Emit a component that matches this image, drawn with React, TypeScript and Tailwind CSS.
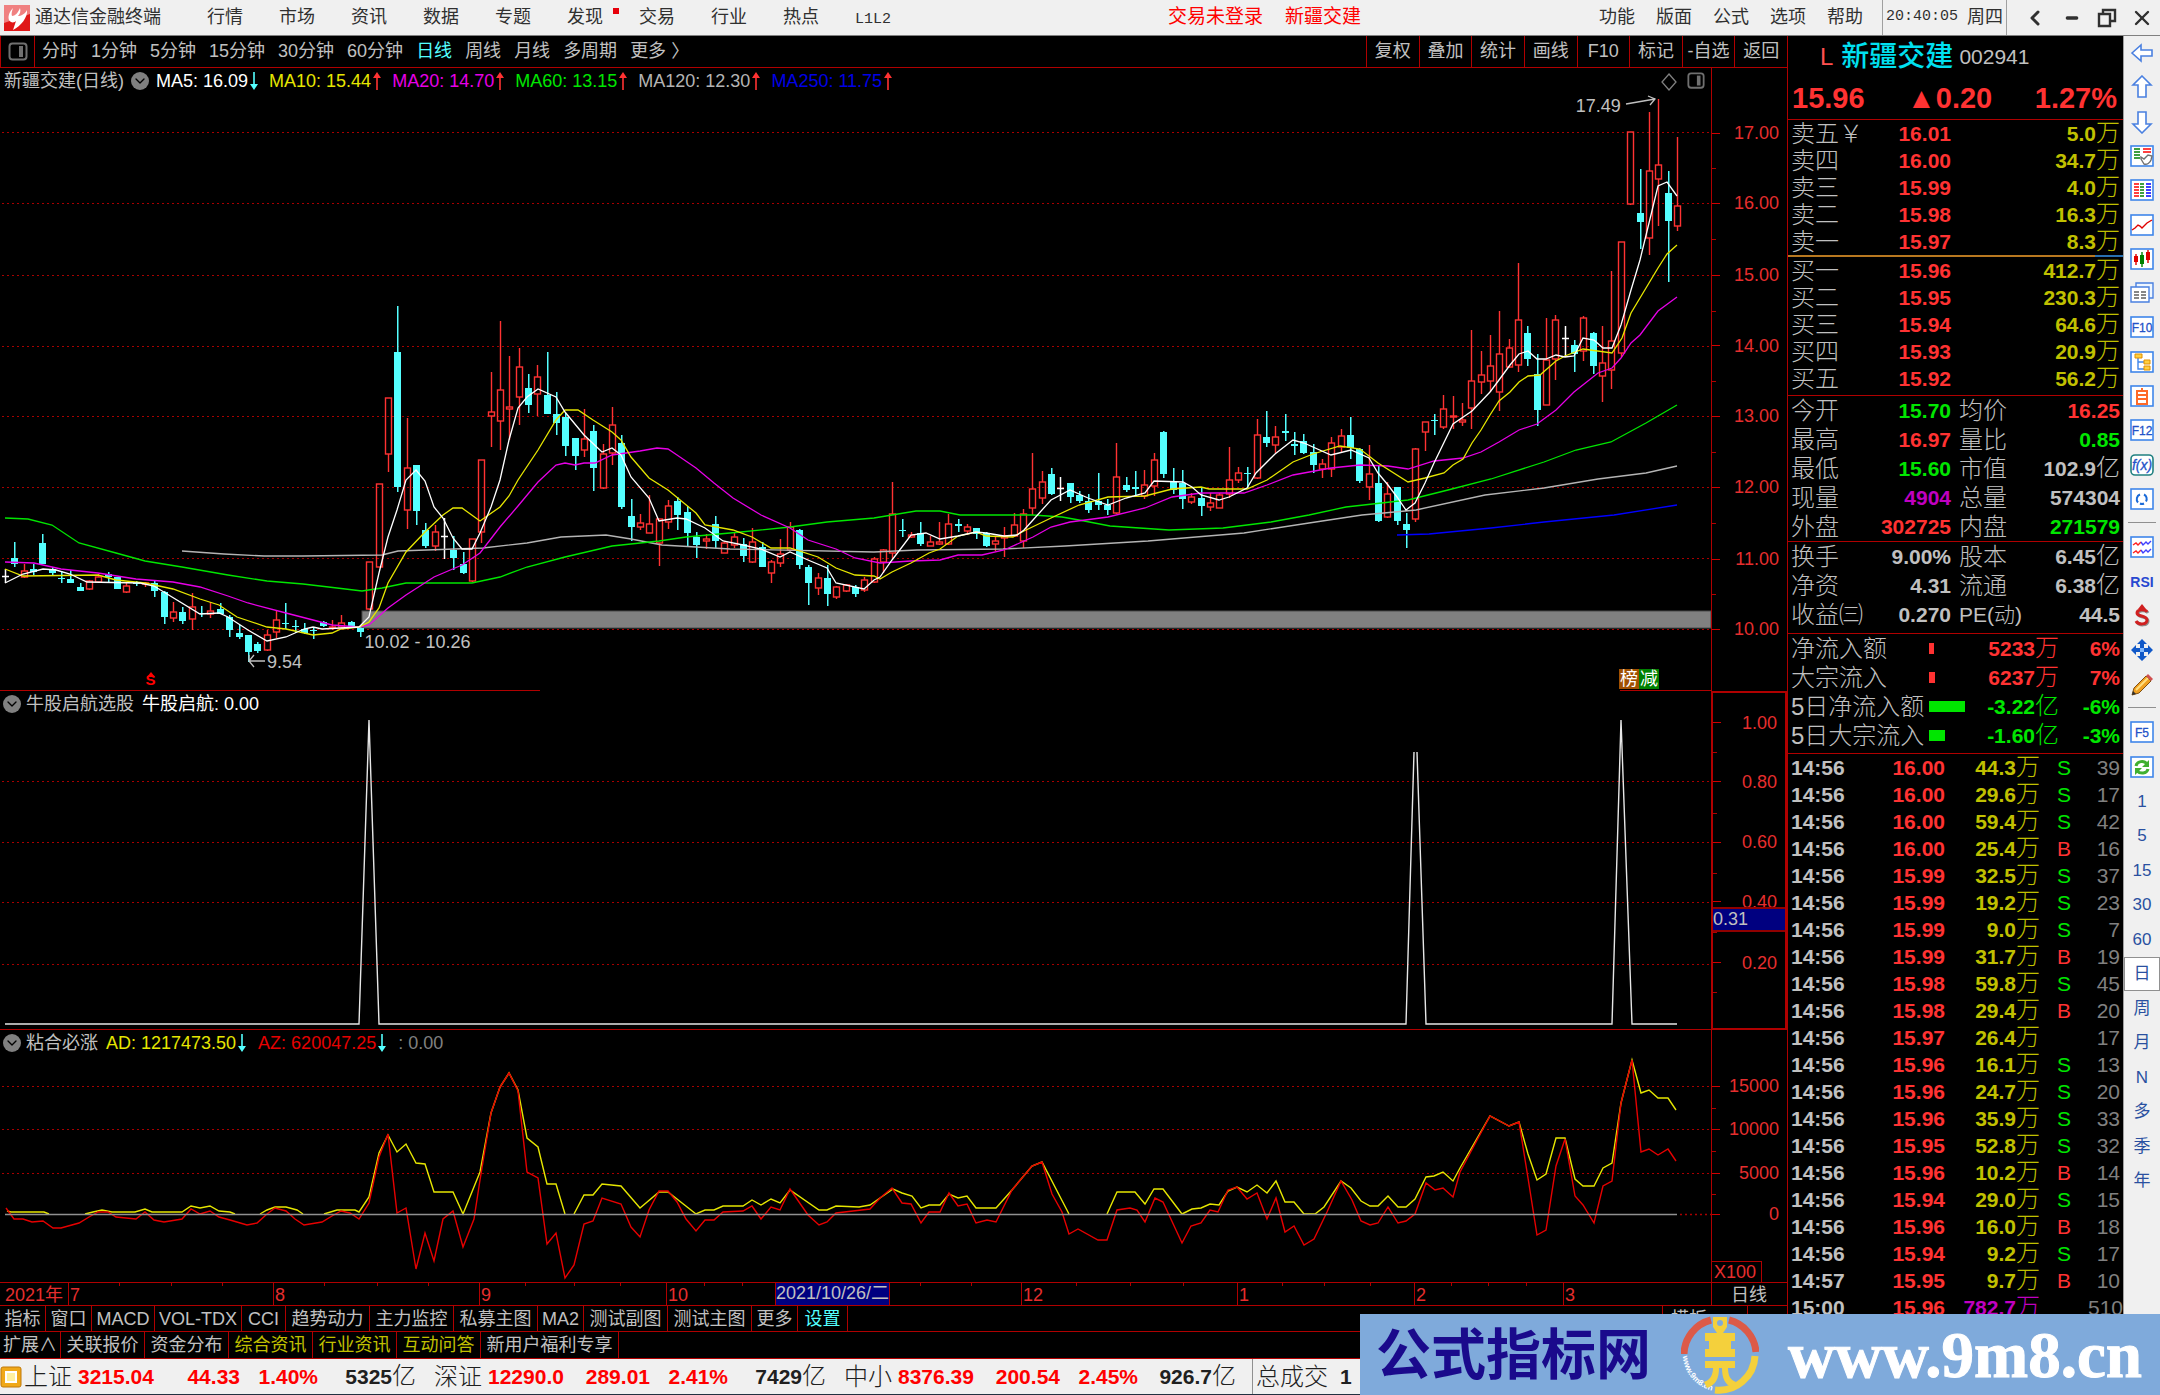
import type { ReactNode } from "react";
import { Minus, X, ChevronLeft, ChevronDown } from "lucide-react";

type Candle = [kind: "r" | "c" | "w", high: number, top: number, bottom: number, low: number];

const MENU = ["行情", "市场", "资讯", "数据", "专题", "发现", "交易", "行业", "热点", "L1L2"];
const RIGHT_MENU = ["功能", "版面", "公式", "选项", "帮助"];
const PERIODS = ["分时", "1分钟", "5分钟", "15分钟", "30分钟", "60分钟", "日线", "周线", "月线", "多周期", "更多 〉"];
const TOOLS = ["复权", "叠加", "统计", "画线", "F10", "标记", "-自选", "返回"];

// first candle sits at x = 5, one candle every 9.34 units
const CANDLES: Candle[] = [
  ["w", 569, 576, 576, 583], ["c", 542, 558, 564, 567], ["r", 564, 571, 577, 578], ["c", 564, 569, 572, 575],
  ["c", 534, 543, 564, 564], ["c", 567, 569, 573, 576], ["c", 571, 578, 579, 583], ["c", 570, 579, 583, 583],
  ["c", 583, 587, 591, 591], ["r", 580, 581, 589, 590], ["r", 574, 577, 582, 583], ["c", 572, 574, 577, 583],
  ["c", 577, 577, 589, 589], ["r", 583, 586, 592, 593], ["c", 581, 583, 584, 586], ["r", 582, 583, 584, 587],
  ["c", 580, 583, 591, 597], ["c", 591, 592, 617, 624], ["r", 602, 612, 618, 622], ["c", 607, 612, 621, 624],
  ["r", 593, 607, 619, 630], ["c", 606, 613, 614, 617], ["r", 602, 611, 614, 618], ["c", 603, 609, 614, 614],
  ["c", 615, 617, 630, 637], ["c", 625, 633, 637, 639], ["c", 635, 635, 652, 662], ["c", 642, 644, 651, 653],
  ["r", 630, 635, 650, 651], ["r", 611, 620, 632, 638], ["c", 603, 623, 624, 629], ["c", 620, 626, 627, 633],
  ["c", 623, 629, 633, 634], ["c", 627, 630, 631, 639], ["c", 621, 622, 626, 627], ["r", 620, 627, 628, 630],
  ["r", 615, 623, 627, 628], ["c", 621, 622, 626, 627], ["c", 627, 628, 632, 637], ["r", 562, 562, 609, 610],
  ["r", 484, 484, 567, 567], ["r", 398, 398, 454, 472], ["c", 306, 352, 487, 492], ["r", 418, 468, 510, 529],
  ["c", 465, 465, 511, 525], ["c", 523, 530, 546, 548], ["r", 525, 532, 546, 551], ["w", 518, 536, 536, 559],
  ["c", 536, 550, 558, 570], ["c", 552, 564, 573, 574], ["r", 539, 539, 581, 582], ["r", 460, 460, 532, 543],
  ["r", 372, 412, 416, 447], ["r", 321, 390, 421, 450], ["r", 356, 407, 409, 440], ["r", 348, 367, 397, 425],
  ["c", 374, 388, 405, 413], ["r", 365, 377, 394, 416], ["c", 352, 395, 414, 414], ["c", 392, 414, 423, 435],
  ["c", 413, 417, 446, 456], ["c", 438, 438, 456, 470], ["r", 409, 439, 450, 457], ["c", 425, 431, 468, 491],
  ["r", 444, 454, 488, 489], ["r", 407, 425, 453, 465], ["c", 435, 443, 507, 509], ["c", 499, 516, 527, 541],
  ["r", 514, 523, 527, 530], ["r", 495, 524, 533, 533], ["r", 519, 519, 543, 566], ["r", 500, 506, 522, 529],
  ["c", 497, 501, 515, 530], ["c", 506, 512, 533, 547], ["c", 532, 537, 545, 558], ["r", 534, 539, 541, 549],
  ["c", 516, 524, 541, 548], ["r", 542, 543, 553, 553], ["r", 532, 537, 545, 548], ["c", 538, 544, 556, 562],
  ["r", 528, 542, 562, 563], ["c", 542, 547, 567, 567], ["r", 560, 562, 573, 583], ["r", 539, 554, 563, 567],
  ["r", 522, 527, 550, 550], ["c", 529, 530, 565, 569], ["c", 565, 567, 583, 605], ["r", 573, 578, 588, 595],
  ["c", 565, 578, 594, 606], ["r", 586, 587, 597, 599], ["r", 584, 585, 591, 592], ["c", 585, 587, 594, 597],
  ["r", 577, 580, 590, 592], ["r", 557, 559, 582, 583], ["r", 549, 550, 562, 573], ["r", 482, 514, 553, 559],
  ["c", 519, 530, 531, 537], ["r", 532, 535, 537, 538], ["c", 522, 533, 544, 546], ["r", 536, 542, 546, 546],
  ["r", 522, 542, 544, 545], ["r", 514, 524, 544, 545], ["c", 519, 524, 526, 532], ["r", 524, 527, 531, 535],
  ["c", 528, 528, 534, 539], ["c", 532, 533, 546, 547], ["r", 537, 541, 544, 551], ["r", 527, 536, 538, 557],
  ["r", 513, 525, 536, 537], ["r", 509, 514, 541, 548], ["r", 453, 489, 508, 515], ["r", 471, 482, 498, 504],
  ["c", 468, 474, 494, 495], ["w", 477, 488, 488, 501], ["c", 483, 483, 497, 503], ["c", 491, 495, 501, 503],
  ["c", 494, 501, 510, 513], ["c", 473, 501, 505, 510], ["c", 499, 505, 510, 515], ["r", 443, 477, 513, 514],
  ["c", 477, 485, 490, 492], ["c", 471, 487, 489, 497], ["r", 470, 485, 496, 499], ["r", 453, 460, 486, 496],
  ["c", 431, 432, 474, 478], ["c", 468, 481, 490, 494], ["c", 470, 483, 499, 509], ["r", 493, 497, 502, 504],
  ["c", 488, 498, 506, 516], ["r", 493, 503, 507, 511], ["r", 493, 495, 508, 508], ["r", 447, 480, 494, 498],
  ["r", 467, 473, 480, 483], ["c", 467, 473, 474, 488], ["r", 419, 435, 478, 479], ["c", 411, 437, 443, 447],
  ["r", 426, 437, 445, 453], ["c", 414, 431, 433, 441], ["c", 432, 444, 446, 455], ["c", 434, 441, 453, 454],
  ["c", 444, 452, 465, 473], ["r", 459, 464, 469, 478], ["r", 437, 443, 469, 477], ["r", 429, 436, 447, 452],
  ["c", 417, 435, 448, 459], ["c", 448, 449, 481, 483], ["r", 445, 474, 487, 500], ["c", 465, 483, 521, 522],
  ["r", 482, 494, 517, 518], ["c", 487, 487, 521, 525], ["c", 513, 524, 530, 548], ["r", 448, 449, 519, 522],
  ["r", 422, 422, 432, 451], ["c", 414, 420, 421, 435], ["r", 395, 409, 427, 429], ["r", 396, 416, 417, 429],
  ["r", 403, 420, 422, 426], ["r", 330, 381, 408, 429], ["r", 351, 375, 382, 394], ["r", 335, 366, 381, 392],
  ["r", 311, 354, 392, 411], ["r", 339, 348, 367, 368], ["r", 263, 320, 365, 372], ["c", 326, 333, 359, 366],
  ["c", 354, 374, 410, 426], ["r", 318, 360, 405, 405], ["r", 315, 320, 359, 380], ["w", 326, 338, 338, 357],
  ["c", 340, 345, 354, 372], ["r", 316, 318, 351, 361], ["c", 332, 333, 366, 374], ["r", 326, 363, 376, 402],
  ["r", 271, 341, 370, 389], ["r", 242, 242, 353, 357], ["r", 132, 132, 204, 205], ["c", 169, 213, 222, 249],
  ["r", 112, 171, 238, 255], ["r", 99, 165, 179, 226], ["c", 171, 193, 221, 282], ["r", 137, 206, 226, 231],
];

const AVERAGES = [
  {
    color: "#0000ff",
    points: "1397,535 1429,534 1491,528 1544,522 1614,515 1677,505",
  },
  {
    color: "#b4b4b4",
    points:
      "182,551 224,554 264,556 303,556 382,555 398,551 483,548 527,543 561,537 606,535 631,539 662,545 730,549 874,552 917,550 1003,549 1065,546 1148,541 1244,533 1309,523 1362,515 1416,510 1485,495 1544,488 1598,479 1646,473 1677,466",
  },
  {
    color: "#00e600",
    points:
      "5,518 28,519 52,525 79,543 116,553 145,561 182,567 228,575 267,581 303,584 337,588 362,591 382,588 406,583 472,583 500,577 527,567 565,557 612,546 659,541 686,537 741,532 790,527 827,522 874,518 916,511 940,511 960,515 1033,515 1062,517 1079,520 1110,526 1169,530 1223,528 1271,522 1309,515 1346,507 1408,500 1448,490 1491,479 1544,462 1576,450 1611,442 1646,423 1677,405",
  },
  {
    color: "#e600e6",
    points:
      "5,562 34,563 61,569 98,573 136,579 173,582 200,587 228,596 248,603 286,613 313,620 332,625 359,627 369,625 388,608 406,595 434,577 462,565 480,553 500,527 518,506 538,482 556,465 565,463 575,465 584,463 595,463 612,455 640,451 657,448 668,449 677,455 696,468 714,483 733,498 761,515 790,528 808,540 836,549 855,558 880,563 911,561 940,560 958,555 982,555 1004,550 1033,537 1051,527 1070,522 1108,517 1145,508 1172,497 1201,493 1244,493 1267,485 1293,475 1331,468 1360,465 1388,466 1408,469 1434,461 1463,458 1481,452 1499,442 1519,430 1537,424 1556,410 1574,392 1598,373 1612,368 1621,358 1631,343 1640,335 1658,311 1677,297",
  },
  {
    color: "#e6e600",
    points:
      "5,569 23,576 98,575 116,580 145,583 173,589 200,599 219,605 237,617 267,627 286,629 313,635 332,633 341,629 359,627 369,622 379,608 388,583 406,552 425,532 443,515 453,508 462,508 480,521 500,507 509,496 518,480 538,450 556,420 565,410 578,410 593,420 612,432 621,440 631,457 649,478 668,490 696,513 705,525 733,530 752,537 771,548 790,548 818,557 836,568 855,575 874,576 880,579 892,572 911,563 929,553 940,549 958,536 976,532 986,536 1013,537 1024,531 1051,518 1079,505 1108,497 1145,496 1172,489 1201,487 1209,489 1247,489 1267,480 1293,462 1313,454 1340,446 1360,449 1378,463 1408,482 1425,478 1444,473 1453,465 1463,459 1472,443 1481,430 1490,415 1499,401 1510,392 1519,382 1528,376 1540,375 1556,361 1565,356 1583,349 1612,353 1622,338 1631,313 1649,283 1658,268 1667,254 1677,245",
  },
  {
    color: "#ffffff",
    points:
      "5,583 23,574 43,569 56,570 70,574 87,582 140,583 154,586 200,614 219,613 228,617 248,630 267,641 286,637 304,629 313,627 322,629 359,627 369,617 379,573 388,537 397,510 406,480 416,470 425,481 434,507 443,518 453,538 462,549 472,549 480,533 491,507 500,480 509,440 518,408 527,397 538,389 556,397 565,412 584,435 602,452 612,448 621,455 631,477 649,498 659,521 677,518 686,519 705,528 723,541 743,545 761,549 780,557 790,552 808,560 827,568 836,583 864,589 874,580 880,577 892,560 902,547 911,535 926,533 940,539 958,536 976,532 986,533 1004,536 1017,535 1024,530 1033,520 1051,500 1070,490 1088,498 1108,505 1126,498 1145,493 1154,481 1183,482 1192,487 1201,495 1219,500 1229,497 1247,488 1256,473 1275,454 1293,440 1304,443 1331,455 1351,450 1369,458 1378,473 1388,485 1397,497 1406,510 1415,503 1425,483 1434,463 1453,424 1472,411 1490,392 1499,380 1510,365 1519,354 1528,351 1537,359 1546,359 1556,355 1565,357 1574,356 1583,338 1594,340 1603,348 1612,348 1621,325 1631,290 1640,260 1649,223 1658,186 1667,182 1677,196",
  },
];

const AD_LINES = [
  "7,1211 11,1212 44,1212 49,1214",
  "85,1214 93,1212 102,1210 112,1212 135,1212 145,1209 152,1212 182,1212 191,1206 200,1208 210,1206 219,1211 230,1212 235,1214",
  "260,1214 267,1210 275,1207 286,1207 297,1210 303,1214",
  "324,1214 337,1210 355,1210 359,1212 369,1197 379,1153 388,1135 397,1152 406,1144 416,1163 425,1164 434,1192 453,1192 463,1214 480,1172 491,1113 500,1087 509,1073 518,1090 527,1138 538,1147 547,1184 556,1184 565,1214",
  "574,1214 584,1195 593,1195 602,1184 621,1186 640,1208 659,1192 668,1192 696,1214 705,1210 714,1210 723,1206 743,1206 752,1200 761,1205 771,1199 780,1203 790,1190 819,1210 827,1210 836,1206 859,1207 870,1205 880,1198 893,1189 902,1193 912,1196 921,1208 929,1205 940,1205 949,1194 958,1198 967,1196 976,1208 996,1208 1012,1190 1032,1166 1042,1162 1069,1214",
  "1107,1214 1117,1192 1135,1192 1145,1204 1154,1189 1163,1189 1182,1214 1192,1209 1201,1208 1210,1204 1219,1205 1228,1191 1237,1187 1247,1192 1257,1185 1267,1193 1276,1181 1285,1202 1294,1202 1304,1214 1315,1214 1324,1207 1341,1181 1351,1188 1361,1201 1370,1206 1378,1206 1388,1196 1398,1207 1406,1207 1415,1199 1426,1177 1434,1176 1443,1172 1453,1181 1460,1168 1490,1116 1509,1126 1519,1122 1528,1154 1537,1180 1546,1174 1556,1138 1565,1138 1575,1179 1583,1186 1594,1186 1603,1168 1612,1163 1621,1103 1632,1060 1641,1093 1649,1090 1658,1098 1668,1098 1676,1110",
];

const AZ_LINE =
  "6,1208 14,1219 23,1219 32,1222 43,1221 53,1228 61,1228 79,1223 89,1217 98,1212 108,1212 116,1217 136,1219 145,1212 154,1220 164,1222 182,1219 191,1209 200,1214 210,1211 219,1217 230,1220 247,1225 257,1223 267,1214 275,1208 286,1211 295,1219 304,1225 322,1222 332,1216 341,1211 350,1213 359,1219 369,1203 379,1157 388,1134 397,1213 406,1208 416,1269 425,1233 434,1261 443,1219 453,1211 463,1247 474,1219 480,1180 491,1113 500,1087 509,1073 518,1091 527,1172 538,1178 547,1244 556,1233 565,1278 574,1265 584,1224 593,1221 602,1198 621,1204 631,1227 640,1237 649,1210 659,1191 668,1191 677,1202 686,1219 696,1231 705,1220 714,1220 723,1212 743,1211 752,1206 761,1219 771,1207 780,1210 790,1189 808,1215 819,1225 827,1222 836,1213 870,1209 880,1198 892,1188 902,1203 911,1204 921,1223 929,1212 940,1212 949,1193 958,1206 967,1204 976,1223 987,1220 996,1222 1012,1190 1032,1166 1042,1162 1052,1194 1062,1212 1069,1234 1078,1229 1098,1240 1107,1240 1117,1210 1130,1208 1137,1210 1145,1222 1155,1198 1163,1202 1182,1243 1191,1226 1201,1223 1210,1210 1218,1212 1228,1190 1237,1187 1247,1199 1257,1193 1267,1219 1276,1198 1285,1232 1294,1226 1304,1245 1314,1239 1327,1212 1341,1181 1352,1200 1361,1221 1370,1225 1378,1223 1388,1207 1398,1223 1406,1221 1415,1214 1426,1183 1435,1190 1443,1188 1453,1197 1460,1172 1490,1116 1509,1126 1519,1122 1528,1178 1537,1235 1546,1230 1556,1166 1565,1139 1575,1196 1583,1205 1594,1223 1603,1186 1612,1181 1621,1103 1632,1060 1641,1152 1649,1149 1658,1155 1668,1149 1676,1161";

const ASKS = [
  ["卖五￥", "16.01", "5.0"],
  ["卖四", "16.00", "34.7"],
  ["卖三", "15.99", "4.0"],
  ["卖二", "15.98", "16.3"],
  ["卖一", "15.97", "8.3"],
];

const BIDS = [
  ["买一", "15.96", "412.7"],
  ["买二", "15.95", "230.3"],
  ["买三", "15.94", "64.6"],
  ["买四", "15.93", "20.9"],
  ["买五", "15.92", "56.2"],
];

const RED = "text-[#ff3232]";
const GREEN = "text-[#00e600]";
const GRAY = "text-[#c0c0c0]";
const PURPLE = "text-[#c000c0]";

const STATS = [
  ["今开", "15.70", GREEN, "均价", "16.25", RED, ""],
  ["最高", "16.97", RED, "量比", "0.85", GREEN, ""],
  ["最低", "15.60", GREEN, "市值", "102.9", GRAY, "亿"],
  ["现量", "4904", PURPLE, "总量", "574304", GRAY, ""],
  ["外盘", "302725", RED, "内盘", "271579", GREEN, ""],
];

const SHARES = [
  ["换手", "9.00%", GRAY, "股本", "6.45", GRAY, "亿"],
  ["净资", "4.31", GRAY, "流通", "6.38", GRAY, "亿"],
  ["收益㈢", "0.270", GRAY, "PE(动)", "44.5", GRAY, ""],
];

const FLOWS = [
  { name: "净流入额", bar: 5, value: "5233", unit: "万", pct: "6%", up: true },
  { name: "大宗流入", bar: 6, value: "6237", unit: "万", pct: "7%", up: true },
  { name: "5日净流入额", bar: 36, value: "-3.22", unit: "亿", pct: "-6%", up: false },
  { name: "5日大宗流入", bar: 16, value: "-1.60", unit: "亿", pct: "-3%", up: false },
];

const TICKS = [
  ["14:56", "16.00", "44.3", "S", "39"],
  ["14:56", "16.00", "29.6", "S", "17"],
  ["14:56", "16.00", "59.4", "S", "42"],
  ["14:56", "16.00", "25.4", "B", "16"],
  ["14:56", "15.99", "32.5", "S", "37"],
  ["14:56", "15.99", "19.2", "S", "23"],
  ["14:56", "15.99", "9.0", "S", "7"],
  ["14:56", "15.99", "31.7", "B", "19"],
  ["14:56", "15.98", "59.8", "S", "45"],
  ["14:56", "15.98", "29.4", "B", "20"],
  ["14:56", "15.97", "26.4", "", "17"],
  ["14:56", "15.96", "16.1", "S", "13"],
  ["14:56", "15.96", "24.7", "S", "20"],
  ["14:56", "15.96", "35.9", "S", "33"],
  ["14:56", "15.95", "52.8", "S", "32"],
  ["14:56", "15.96", "10.2", "B", "14"],
  ["14:56", "15.94", "29.0", "S", "15"],
  ["14:56", "15.96", "16.0", "B", "18"],
  ["14:56", "15.94", "9.2", "S", "17"],
  ["14:57", "15.95", "9.7", "B", "10"],
  ["15:00", "15.96", "782.7", "", "510"],
];

const MONTHS: [number, string][] = [[68, "7"], [273, "8"], [479, "9"], [666, "10"], [1021, "12"], [1237, "1"], [1414, "2"], [1563, "3"]];
const DATE_TICKS = [119, 171, 222, 324, 377, 428, 525, 574, 620, 704, 742, 920, 971, 1076, 1130, 1183, 1282, 1324, 1370, 1451, 1488, 1526];

const INDICATORS = [
  ["指标", "w-[46px]"], ["窗口", "w-[46px]"], ["MACD", "w-[63px]"], ["VOL-TDX", "w-[87px]"], ["CCI", "w-[44px]"],
  ["趋势动力", "w-[84px]"], ["主力监控", "w-[84px]"], ["私募主图", "w-[84px]"], ["MA2", "w-[46px]"],
  ["测试副图", "w-[84px]"], ["测试主图", "w-[84px]"], ["更多", "w-[46px]"], ["设置", "w-[50px] text-[#54ffff]"],
];

const EXTENSIONS = [
  ["扩展∧", "w-[61px]"], ["关联报价", "w-[84px]"], ["资金分布", "w-[84px]"], ["综合资讯", "w-[84px] text-[#c0c000]"],
  ["行业资讯", "w-[84px] text-[#c0c000]"], ["互动问答", "w-[84px] text-[#c0c000]"], ["新用户福利专享", "w-[138px]"],
];

const INDEXES = [
  { name: "上证", last: "3215.04", diff: "44.33", pct: "1.40%", amount: "5325" },
  { name: "深证", last: "12290.0", diff: "289.01", pct: "2.41%", amount: "7429" },
  { name: "中小", last: "8376.39", diff: "200.54", pct: "2.45%", amount: "926.7" },
];

function PanelIcon({ className }: { className: string }) {
  return (
    <svg viewBox="0 0 20 20" className={className} fill="none">
      <rect x="1.5" y="1.5" width="17" height="16" rx="3" stroke="currentColor" strokeWidth="2" />
      <rect x="11" y="4" width="4" height="11" fill="currentColor" />
    </svg>
  );
}

function Toggle() {
  return (
    <button aria-label="折叠" className="flex size-[18px] items-center justify-center rounded-full bg-[#808080] text-black">
      <ChevronDown className="size-4" strokeWidth={2} />
    </button>
  );
}

function Arrow({ up }: { up?: boolean }) {
  return up ? (
    <svg viewBox="0 0 8 18" className="h-[18px] w-2">
      <path d="M4 18V4" stroke="#ff3232" strokeWidth="1.6" />
      <path d="M4 0 8 6H0z" fill="#ff3232" />
    </svg>
  ) : (
    <svg viewBox="0 0 8 18" className="h-[18px] w-2">
      <path d="M4 0v14" stroke="#54ffff" strokeWidth="1.6" />
      <path d="M4 18 8 12H0z" fill="#54ffff" />
    </svg>
  );
}

function GridLines({ rows }: { rows: number[] }) {
  return (
    <>
      {rows.map((y) => (
        <path key={y} d={`M2 ${y}.5H1711`} stroke="#a80000" strokeDasharray="2 3" shapeRendering="crispEdges" />
      ))}
    </>
  );
}

interface AxisProps {
  top: number;
  height: number;
  labels: [number, string][];
  minor: number[];
  className?: string;
  children?: ReactNode;
}

function Axis({ top, height, labels, minor, className = "", children }: AxisProps) {
  const at = (y: number) => ({ top: `${((y - top) / height) * 100}%` });
  return (
    <div className={`relative w-[76px] flex-none border-[#b00000] text-[18px] leading-5 text-[#e62e2e] ${className}`}>
      {minor.map((y) => (
        <span key={y} className="absolute left-0 h-px w-1 bg-[#b00000]" style={at(y)} />
      ))}
      {labels.map(([y, text]) => (
        <div key={y} className="absolute inset-x-0 flex -translate-y-1/2 items-center justify-between pr-2" style={at(y)}>
          <span className="h-px w-2 bg-[#d00000]" />
          <span>{text}</span>
        </div>
      ))}
      {children}
    </div>
  );
}

function PriceChart() {
  return (
    <svg viewBox="0 68 1711 623" preserveAspectRatio="none" className="absolute inset-0 size-full">
      <GridLines rows={[132, 203, 275, 346, 416, 487, 558, 629]} />
      <rect x="362" y="611" width="1349" height="17" fill="#808080" stroke="#4a4a4a" />
      {CANDLES.map(([kind, high, top, bottom, low], i) => {
        const x = Math.round(5 + i * 9.34);
        const height = Math.max(bottom - top, 1);
        if (kind === "w") {
          return <path key={i} d={`M${x + 0.5} ${high}V${low}M${x - 3} ${top + 0.5}h7`} stroke="#fff" strokeWidth="1.5" />;
        }
        if (kind === "c") {
          return (
            <g key={i} fill="#54ffff">
              <rect x={x} y={high} width="1.5" height={low - high} />
              <rect x={x - 3} y={top} width="7" height={height} />
            </g>
          );
        }
        return (
          <g key={i} stroke="#ff3232" strokeWidth="1.4" fill="none">
            <path d={`M${x + 0.5} ${high}V${top}M${x + 0.5} ${bottom}V${low}`} />
            <rect x={x - 2.5} y={top} width="6" height={height} />
          </g>
        );
      })}
      {AVERAGES.map((line) => (
        <polyline key={line.color} points={line.points} fill="none" stroke={line.color} strokeWidth="1.3" />
      ))}
      <g fill="none" stroke="#c0c0c0" strokeWidth="1.3">
        <path d="M265 661h-16M254 655l-5 6 5 6M249 661v-6" />
        <path d="M1626 104 1655 99M1648 96l7 3-5 6" />
        <path d="M1669 74l7 8-7 8-7-8z" stroke="#808080" />
      </g>
      <path d="M151 672l4 5h-8z" fill="#ff0000" />
      <path d="M0 690.5H540M1620 690.5H1711" stroke="#b00000" />
    </svg>
  );
}

function SignalChart() {
  return (
    <svg viewBox="0 691 1711 339" preserveAspectRatio="none" className="absolute inset-0 size-full">
      <GridLines rows={[781, 842, 902, 964]} />
      <g fill="none" stroke="#e6e6e6" strokeWidth="1.4">
        <path d="M5 1024H359L369 720 379 1024H1406L1414 752M1417 752 1426 1024H1612L1621 720 1632 1024H1677" />
      </g>
      <path d="M0 1029.5H1711" stroke="#b00000" />
    </svg>
  );
}

function FlowChart() {
  return (
    <svg viewBox="0 1030 1711 252" preserveAspectRatio="none" className="absolute inset-0 size-full">
      <GridLines rows={[1086, 1129, 1173]} />
      <g fill="none" strokeWidth="1.4">
        <path d="M1680 1214.5H1711" stroke="#a80000" strokeDasharray="2 3" />
        {AD_LINES.map((points) => (
          <polyline key={points} points={points} stroke="#e6e600" />
        ))}
        <polyline points={AZ_LINE} stroke="#e60000" />
        <path d="M5 1214.5H1677" stroke="#909090" />
      </g>
    </svg>
  );
}

function DateAxis() {
  const at = (x: number) => ({ left: `${(x / 1711) * 100}%` });
  return (
    <div className="flex h-6 flex-none border-y border-[#b00000] text-[18px] leading-6 text-[#e62e2e]">
      <div className="relative flex-1">
        <span className="absolute left-[5px] leading-6">2021年</span>
        {DATE_TICKS.map((x) => (
          <span key={x} className="absolute top-0 h-[3px] w-px bg-[#b00000]" style={at(x)} />
        ))}
        {MONTHS.map(([x, text]) => (
          <span key={x} className="absolute inset-y-0 border-l border-[#b00000] pl-px" style={at(x)}>
            {text}
          </span>
        ))}
        <span className="absolute inset-y-0 border-x border-[#b00000] bg-[#000080] leading-5 text-[#c0c0c0]" style={at(775)}>
          2021/10/26/二
        </span>
      </div>
      <div className="w-[76px] border-l border-[#b00000] pl-[19px] text-[#c0c0c0]">日线</div>
    </div>
  );
}

function Unit({ children }: { children: ReactNode }) {
  return <span className="text-[24px] leading-5 font-light">{children}</span>;
}

function Depth({ rows, label }: { rows: string[][]; label: string }) {
  return (
    <table aria-label={label} className="w-full table-fixed">
      <tbody>
        {rows.map(([name, price, volume]) => (
          <tr key={name} className="h-[27px]">
            <th className="w-[84px] text-left text-[24px] leading-5 font-light whitespace-nowrap text-[#c0c0c0]">{name}</th>
            <td className="w-[76px] text-right font-bold text-[#ff3232]">{price}</td>
            <td className="text-right font-bold text-[#c0c000]">
              {volume}
              <Unit>万</Unit>
            </td>
          </tr>
        ))}
      </tbody>
    </table>
  );
}

function Stats({ rows, label }: { rows: string[][]; label: string }) {
  return (
    <table aria-label={label} className="w-full table-fixed">
      <tbody>
        {rows.map(([name, value, tone, name2, value2, tone2, unit]) => (
          <tr key={name} className="h-[29px]">
            <th className="w-[74px] text-left text-[24px] leading-5 font-light whitespace-nowrap text-[#c0c0c0]">{name}</th>
            <td className={`w-[86px] text-right font-bold ${tone}`}>{value}</td>
            <th
              className={`w-[80px] pl-2 text-left leading-5 font-light whitespace-nowrap text-[#c0c0c0] ${name2.startsWith("PE") ? "text-[21px]" : "text-[24px]"}`}
            >
              {name2}
            </th>
            <td className={`text-right font-bold ${tone2}`}>
              {value2}
              {unit && <Unit>{unit}</Unit>}
            </td>
          </tr>
        ))}
      </tbody>
    </table>
  );
}

function Quote() {
  return (
    <aside className="flex w-[337px] flex-none flex-col overflow-hidden border-x border-l-[#b00000] border-r-[#a0a0a0] text-[21px] leading-6 text-[#c0c0c0]">
      <div className="h-[84px] flex-none border-b border-[#b00000]">
        <div className="flex h-[42px] items-center pl-8">
          <span className="text-[24px] text-[#ff5050]">L</span>
          <h1 className="ml-2 text-[28px] leading-9 font-medium text-[#00e0f0]">新疆交建</h1>
          <span className="ml-[6px] text-[21px]">002941</span>
        </div>
        <div className="flex h-10 items-center justify-between pr-[6px] pl-1 text-[29px] font-bold text-[#ff3232]">
          <span>15.96</span>
          <span>▲0.20</span>
          <span>1.27%</span>
        </div>
      </div>
      <div className="px-[3px]">
        <Depth rows={ASKS} label="卖盘" />
      </div>
      <div className="flex h-[2px] flex-none">
        <span className="flex-1 bg-[#b87820]" />
        <span className="w-7 bg-[#2870b0]" />
      </div>
      <div className="border-b border-[#b00000] px-[3px] pb-[3px]">
        <Depth rows={BIDS} label="买盘" />
      </div>
      <div className="border-b border-[#b00000] px-[3px]">
        <Stats rows={STATS} label="行情" />
      </div>
      <div className="border-b border-[#b00000] px-[3px] pb-1">
        <Stats rows={SHARES} label="股本" />
      </div>
      <div className="border-b border-[#b00000] px-[3px] pb-[3px]">
        <table aria-label="资金" className="w-full table-fixed">
          <tbody>
            {FLOWS.map((f) => (
              <tr key={f.name} className={`h-[29px] font-bold ${f.up ? RED : GREEN}`}>
                <th className="w-[138px] text-left text-[24px] leading-5 font-light whitespace-nowrap text-[#c0c0c0]">{f.name}</th>
                <td className="w-10">
                  <span className={`block h-[11px] ${f.up ? "bg-[#ff3232]" : "bg-[#00e600]"}`} style={{ width: f.bar }} />
                </td>
                <td className="w-[90px] text-right whitespace-nowrap">
                  {f.value}
                  <Unit>{f.unit}</Unit>
                </td>
                <td className="text-right">{f.pct}</td>
              </tr>
            ))}
          </tbody>
        </table>
      </div>
      <div className="px-[3px]">
        <table aria-label="分笔成交" className="w-full table-fixed">
          <tbody>
            {TICKS.map(([time, price, volume, side, count], i) => (
              <tr key={i} className="h-[27px]">
                <td className="w-[70px] font-bold">{time}</td>
                <td className="w-[84px] text-right font-bold text-[#ff3232]">{price}</td>
                <td className={`w-[95px] text-right font-bold ${side === "" && count === "510" ? PURPLE : "text-[#c0c000]"}`}>
                  {volume}
                  <Unit>万</Unit>
                </td>
                <td className={`w-12 text-center ${side === "S" ? GREEN : RED}`}>{side}</td>
                <td className="text-right text-[#808080]">{count}</td>
              </tr>
            ))}
          </tbody>
        </table>
      </div>
    </aside>
  );
}

function Tile({ children }: { children: ReactNode }) {
  return (
    <svg viewBox="0 0 24 22" className="h-[22px] w-6" fill="none">
      <rect x="1" y="1" width="22" height="20" fill="#fff" stroke="#3f86ea" strokeWidth="1.6" />
      {children}
    </svg>
  );
}

function TileText({ text }: { text: string }) {
  return (
    <Tile>
      <text x="12" y="16" textAnchor="middle" fontSize="12" fill="#2452c8" stroke="#2452c8" strokeWidth="0.3">
        {text}
      </text>
    </Tile>
  );
}

const STRIP_TOP: [string, ReactNode][] = [
  ["后退", <svg viewBox="0 0 24 22" className="h-[22px] w-6"><path d="M2 11 11 3v5h11v6H11v5z" fill="#fff" stroke="#4a80e0" strokeWidth="1.6" /></svg>],
  ["上一只", <svg viewBox="0 0 22 24" className="h-6 w-[22px]"><path d="M11 1 20 10h-5v12H7V10H2z" fill="#fff" stroke="#4a80e0" strokeWidth="1.6" /></svg>],
  ["下一只", <svg viewBox="0 0 22 24" className="h-6 w-[22px]"><path d="M11 23 20 14h-5V2H7v12H2z" fill="#fff" stroke="#4a80e0" strokeWidth="1.6" /></svg>],
  [
    "报价",
    <Tile>
      <path d="M4 4h6M4 7h6M4 10h6M4 13h6" stroke="#008000" strokeWidth="1.6" />
      <path d="M13 4h8M13 7h8" stroke="#ff0000" strokeWidth="1.6" />
      <path d="M11 14l3 5c3 1 6-1 7-4l1-4-4-1-4 4-3-2z" stroke="#707070" strokeWidth="1.4" />
    </Tile>,
  ],
  [
    "列表",
    <Tile>
      <path d="M4 5h5M4 8h5M4 11h5M4 14h5M4 17h5" stroke="#ff0000" strokeWidth="1.5" />
      <path d="M10 5h4M10 8h4M10 11h4M10 14h4M10 17h4" stroke="#008000" strokeWidth="1.5" />
      <path d="M16 5h5M16 8h5M16 11h5M16 14h5M16 17h5" stroke="#0000ff" strokeWidth="1.5" />
    </Tile>,
  ],
  ["分时图", <Tile><path d="M2 16l3-2 3-3 2 1 2 2 5-5 5-3" stroke="#e00000" strokeWidth="1.4" /></Tile>],
  [
    "K线图",
    <Tile>
      <path d="M6 6v11M18 2v13" stroke="#e00000" strokeWidth="1.4" />
      <path d="M4 8h4v6H4zM16 4h4v8h-4z" fill="#e00000" />
      <path d="M12 4v15" stroke="#008000" strokeWidth="1.4" />
      <path d="M10 7h4v9h-4z" fill="#008000" />
    </Tile>,
  ],
  [
    "资讯",
    <svg viewBox="0 0 24 22" className="h-[22px] w-6">
      <path d="M6 1h17v15H6z" fill="#eef6ff" stroke="#4a80e0" strokeWidth="1.4" />
      <path d="M1 5h18v15H1z" fill="#fff" stroke="#4a80e0" strokeWidth="1.4" />
      <path d="M4 10h5M11 10h5M4 13h5M11 13h5M4 16h5M11 16h5" stroke="#606060" strokeWidth="1.3" />
    </svg>,
  ],
  ["F10", <TileText text="F10" />],
  [
    "板块",
    <Tile>
      <path d="M8 6v12h6M8 11h6" stroke="#3f86ea" strokeWidth="1.4" />
      <path d="M5 3h7v4H5zM14 9h6v4h-6zM14 15h6v4h-6z" fill="#ffd040" stroke="#e09000" />
    </Tile>,
  ],
  [
    "自选",
    <Tile>
      <path d="M7 6h10v13H7zM7 10h10M7 14h10M12 3v3" stroke="#ff6a28" strokeWidth="2" />
    </Tile>,
  ],
  ["F12", <TileText text="F12" />],
  [
    "公式",
    <svg viewBox="0 0 24 22" className="h-[22px] w-6">
      <rect x="1" y="1" width="22" height="20" rx="4" fill="#fff" stroke="#208080" strokeWidth="1.6" />
      <text x="12" y="16" textAnchor="middle" fontSize="14" fontStyle="italic" fill="#2452c8" stroke="#2452c8" strokeWidth="0.3">f(x)</text>
    </svg>,
  ],
  [
    "刷新",
    <Tile>
      <path d="M8 14.500A5 5 0 0 1 10 6.500M14 6.500a5 5 0 0 1 2 7M14 15.500a5 5 0 0 1-4 0" stroke="#1a6ad8" strokeWidth="2" />
    </Tile>,
  ],
];

const STRIP_MIDDLE: [string, ReactNode][] = [
  [
    "多图",
    <Tile>
      <path d="M3 9l3-2 2 2 3-3M3 17l3-2 2 2 3-3" stroke="#ff2020" strokeWidth="1.4" />
      <path d="M11 6l2 3 3-3 2 2 3-3M11 14l2 3 3-3 2 2 3-3" stroke="#4040ff" strokeWidth="1.4" />
    </Tile>,
  ],
  ["RSI", <span className="text-[14px] font-bold text-[#2848d0]">RSI</span>],
  [
    "交易",
    <svg viewBox="0 0 22 24" className="h-6 w-[22px]" fill="none">
      <path d="M17 9c-2-3-10-3-10 1s10 2 10 7-9 5-11 1" stroke="#909090" strokeWidth="3" />
      <path d="M16 8C14 5 6 5 6 9s10 2 10 7-9 5-11 1" stroke="#d02020" strokeWidth="3" />
      <path d="M11 0l4 5H7z" fill="#d02020" />
    </svg>,
  ],
  [
    "移动",
    <svg viewBox="0 0 24 24" className="size-6">
      <path d="M12 1l5 5H7zM12 23l5-5H7zM1 12l5-5v10zM23 12l-5-5v10z" fill="#1058c8" />
      <path d="M12 5v14M5 12h14" stroke="#1058c8" strokeWidth="4" />
      <rect x="10" y="10" width="4" height="4" fill="#80b8ff" />
    </svg>,
  ],
  [
    "画线",
    <svg viewBox="0 0 24 24" className="size-6">
      <path d="M2 22l2-7L16 3l5 5L9 20z" fill="#f0a020" stroke="#805010" />
      <path d="M6 17 18 5" stroke="#ffe080" strokeWidth="2" />
      <path d="M16 3l2-2 5 5-2 2z" fill="#d05050" />
      <path d="M2 22l1-4 3 3z" fill="#303030" />
    </svg>,
  ],
];

const STRIP_PERIODS = ["1", "5", "15", "30", "60", "日", "周", "月", "N", "多", "季", "年"];

function IconStrip() {
  return (
    <nav aria-label="工具" className="flex w-9 flex-none flex-col bg-[#f0f0f0] text-[#2a50a0]">
      <div className="grid h-[480px] auto-rows-fr place-items-center">
        {STRIP_TOP.map(([label, icon]) => (
          <button key={label} aria-label={label}>{icon}</button>
        ))}
      </div>
      <hr className="mx-1 mt-[6px] mb-[7px] border-[#909090]" />
      <div className="grid h-[172px] auto-rows-fr place-items-center">
        {STRIP_MIDDLE.map(([label, icon]) => (
          <button key={label} aria-label={label}>{icon}</button>
        ))}
      </div>
      <hr className="mx-1 mt-[5px] mb-[7px] border-[#909090]" />
      <div className="grid h-[483px] auto-rows-fr text-[17px]">
        <button aria-label="F5" className="flex items-center justify-center">
          <TileText text="F5" />
        </button>
        <button aria-label="同步" className="flex items-center justify-center">
          <Tile>
            <path d="M6 10c1-5 8-6 11-2M18 13c-1 5-8 5-11 2" stroke="#40b030" strokeWidth="3" />
            <path d="M19 4v7h-7zM5 19v-7h7z" fill="#40b030" />
          </Tile>
        </button>
        {STRIP_PERIODS.map((p) => (
          <button key={p} className={p === "日" ? "border border-[#909090] bg-white" : ""}>
            {p}
          </button>
        ))}
      </div>
    </nav>
  );
}

function Watermark() {
  return (
    <div className="absolute right-0 bottom-0 flex h-[81px] w-[800px] items-center bg-[#7faadb] pl-4 whitespace-nowrap">
      <span className="text-[55px] leading-[80px] font-bold text-[#1a0a8c]">公式指标网</span>
      <svg viewBox="0 0 78 78" className="ml-[30px] size-[78px] flex-none" fill="none">
        <path d="M3 38A36 36 0 0 1 30 4M48 4A36 36 0 0 1 75 36" stroke="#dc5a48" strokeWidth="7" />
        <path d="M74 40A36 36 0 0 1 34 74" stroke="#f4d03c" strokeWidth="7" />
        <path id="arc" d="M2 40A37 37 0 0 0 34 75" />
        <text fontSize="8" fontWeight="bold" fill="#fff">
          <textPath href="#arc">www.9m8.cn</textPath>
        </text>
        <g fill="#f4d03c">
          <path d="M32 1h14v10l-4 6h-6l-4-6z" />
          <path d="M24 17h30v8H24zM28 25h8v10h-8zM42 25h8v10h-8zM24 33h30v8H24zM24 45h30v7H24zM32 52h6c0 10-3 17-12 20l-3-6c6-2 9-7 9-14zM41 52h6c0 7 2 12 8 14l-3 6c-8-3-11-10-11-20z" />
          <path d="M36 15h6v26h-6z" />
        </g>
        <circle cx="39" cy="7" r="3" fill="#7faadb" />
      </svg>
      <span className="ml-[29px] font-['Liberation_Serif',serif] text-[65px] leading-[80px] font-bold text-white [-webkit-text-stroke:1px_white]">
        www.9m8.cn
      </span>
    </div>
  );
}

export default function App() {
  return (
    <div className="relative flex h-screen flex-col overflow-hidden bg-black font-['Liberation_Sans','Noto_Sans_CJK_SC',sans-serif]">
      <header className="flex h-9 flex-none items-center border-b border-[#808080] bg-[#f0f0f0] text-[18px] text-[#303030]">
        <svg viewBox="0 0 26 26" className="ml-1 size-[26px]">
          <rect width="26" height="26" fill="#e01818" />
          <path d="M0 0h26v9L0 18z" fill="#f08080" />
          <path d="M9 3C4 8 3 15 7 17c2 1 4 0 5-1l-3 9C17 21 24 12 23 5c-2 4-6 6-9 6 2-2 3-5 2-8-2 5-5 8-8 8-1-2 0-5 1-8z" fill="#fff" />
        </svg>
        <span className="ml-[5px]">通达信金融终端</span>
        <nav className="ml-[46px] flex gap-9">
          {MENU.map((item) => (
            <button key={item} className="relative w-9 whitespace-nowrap">
              {item === "L1L2" ? <span className="font-['Liberation_Mono',monospace] text-[15px]">{item}</span> : item}
              {item === "发现" && <span className="absolute top-1 -right-4 size-[6px] bg-red-600" />}
            </button>
          ))}
        </nav>
        <div className="ml-auto flex gap-[22px] pr-[238px] text-[19px] text-[#ff0000]">
          <button>交易未登录</button>
          <button>新疆交建</button>
        </div>
        <nav className="flex gap-[21px] pr-[19px]">
          {RIGHT_MENU.map((item) => (
            <button key={item}>{item}</button>
          ))}
        </nav>
        <div className="flex h-full items-center gap-[9px] border-x border-[#a0a0a0] px-[3px]">
          <span className="font-['Liberation_Mono',monospace] text-[15px]">20:40:05</span>
          <span>周四</span>
        </div>
        <div className="flex items-center gap-[13px] pr-[6px] pl-4">
          <button aria-label="收起"><ChevronLeft className="size-6" strokeWidth={3} /></button>
          <button aria-label="最小化" className="px-1"><Minus className="size-4" strokeWidth={5} /></button>
          <button aria-label="还原">
            <svg viewBox="0 0 20 20" className="size-5" fill="none" stroke="#303030" strokeWidth="2.4">
              <path d="M6 5V2h12v11h-4" />
              <path d="M2 6h11v12H2z" />
            </svg>
          </button>
          <button aria-label="关闭"><X className="size-6" strokeWidth={2.4} /></button>
        </div>
      </header>

      <div className="flex min-h-0 flex-1">
        <main className="flex min-w-0 flex-1 flex-col">
          <div className="flex h-8 flex-none items-stretch border-b border-[#b00000] text-[18px] text-[#c0c0c0]">
            <button aria-label="面板" className="flex w-[35px] items-center justify-center border-x border-[#b00000] text-[#707070]">
              <PanelIcon className="size-5" />
            </button>
            <div className="flex gap-[13px] pl-[7px]">
              {PERIODS.map((p) => (
                <button key={p} className={p === "日线" ? "text-[#54ffff]" : ""}>
                  {p}
                </button>
              ))}
            </div>
            <div className="ml-auto grid w-[421px] grid-cols-8">
              {TOOLS.map((t) => (
                <button key={t} className="border-l border-[#b00000] whitespace-nowrap">
                  {t}
                </button>
              ))}
            </div>
          </div>

          <div className="grid min-h-0 flex-1 grid-rows-[623fr_339fr_252fr]">
            <section className="flex min-h-0">
              <div className="relative min-w-0 flex-1">
                <PriceChart />
                <div className="relative flex h-[26px] items-center pl-1 text-[18px]">
                  <span className="text-[#c0c0c0]">新疆交建(日线)</span>
                  <span className="mx-[7px]"><Toggle /></span>
                  <div className="flex items-center gap-[11px]">
                    <span className="flex items-center gap-[2px] text-white">MA5: 16.09 <Arrow /></span>
                    <span className="flex items-center gap-[2px] text-[#e6e600]">MA10: 15.44 <Arrow up /></span>
                    <span className="flex items-center gap-[2px] text-[#e600e6]">MA20: 14.70 <Arrow up /></span>
                    <span className="flex items-center gap-[2px] text-[#00e600]">MA60: 13.15 <Arrow up /></span>
                    <span className="flex items-center gap-[2px] text-[#b4b4b4]">MA120: 12.30 <Arrow up /></span>
                    <span className="flex items-center gap-[2px] text-[#0000e6]">MA250: 11.75 <Arrow up /></span>
                  </div>
                  <PanelIcon className="mr-[6px] ml-auto size-[18px] text-[#707070]" />
                </div>
                {/* marks pinned to single candles */}
                <div className="text-[18px] leading-5 text-[#c0c0c0]">
                  <span className="absolute top-[4.5%] left-[92.1%]">17.49</span>
                  <span className="absolute top-[90.5%] left-[21.3%]">10.02 - 10.26</span>
                  <span className="absolute top-[93.7%] left-[15.6%]">9.54</span>
                  <span className="absolute top-[97%] left-[8.5%] text-[15px] leading-4 font-bold text-[#ff0000]">S</span>
                  <span className="absolute right-[52px] bottom-[2px] flex text-white">
                    <span className="w-5 bg-[#a05000] text-center">榜</span>
                    <span className="w-5 bg-[#008000] text-center">减</span>
                  </span>
                </div>
              </div>
              <Axis
                top={68}
                height={623}
                className="border-l"
                labels={[[133, "17.00"], [203, "16.00"], [275, "15.00"], [346, "14.00"], [416, "13.00"], [487, "12.00"], [559, "11.00"], [629, "10.00"]]}
                minor={[168, 239, 311, 381, 452, 523, 594]}
              />
            </section>

            <section className="flex min-h-0">
              <div className="relative min-w-0 flex-1">
                <SignalChart />
                <div className="relative flex h-[26px] items-center pl-[3px] text-[18px]">
                  <Toggle />
                  <span className="ml-[5px] text-[#c0c0c0]">牛股启航选股</span>
                  <span className="ml-2 text-white">牛股启航: 0.00</span>
                </div>
              </div>
              <Axis
                top={691}
                height={339}
                className="border-2"
                labels={[[721, "1.00"], [781, "0.80"], [842, "0.60"], [902, "0.40"], [964, "0.20"]]}
                minor={[751, 812, 873, 933, 994]}
              >
                <div className="absolute inset-x-0 top-[64%] h-[25px] border-y-2 border-[#900000] bg-[#000080] leading-5 text-[#c0c0c0]">0.31</div>
              </Axis>
            </section>

            <section className="flex min-h-0">
              <div className="relative min-w-0 flex-1">
                <FlowChart />
                <div className="relative flex h-[26px] items-center pl-[3px] text-[18px]">
                  <Toggle />
                  <span className="ml-[5px] text-[#c0c0c0]">粘合必涨</span>
                  <span className="ml-2 flex items-center gap-[2px] text-[#e6e600]">AD: 1217473.50 <Arrow /></span>
                  <span className="ml-3 flex items-center gap-[2px] text-[#e60000]">AZ: 620047.25 <Arrow /></span>
                  <span className="ml-3 text-[#808080]">: 0.00</span>
                </div>
              </div>
              <Axis
                top={1030}
                height={252}
                className="border-l"
                labels={[[1086, "15000"], [1129, "10000"], [1173, "5000"], [1214, "0"]]}
                minor={[1108, 1151, 1194]}
              >
                <div className="absolute bottom-0 left-0 w-[50px] border-t border-r border-[#b00000] pl-[2px]">X100</div>
              </Axis>
            </section>
          </div>

          <DateAxis />
          <div className="flex h-[26px] flex-none border-b border-[#b00000] text-[18px] text-[#c0c0c0]">
            {INDICATORS.map(([name, tone]) => (
              <button key={name} className={`border-r border-[#b00000] whitespace-nowrap ${tone}`}>
                {name}
              </button>
            ))}
            <div className="mr-[39px] ml-auto flex border-x border-[#b00000]">
              <button className="px-2">模板</button>
              <button className="w-8">+</button>
            </div>
          </div>
          <div className="flex h-[27px] flex-none border-b border-[#b00000] text-[18px] text-[#c0c0c0]">
            {EXTENSIONS.map(([name, tone]) => (
              <button key={name} className={`border-r border-[#b00000] whitespace-nowrap ${tone}`}>
                {name}
              </button>
            ))}
          </div>
        </main>

        <Quote />
        <IconStrip />
      </div>

      <footer className="flex h-9 flex-none items-center border-b border-[#203040] bg-[#f0f0f0] text-[21px] font-bold text-[#ff0000]">
        <svg viewBox="0 0 22 22" className="size-[22px]">
          <rect x="1" y="1" width="20" height="20" rx="2" fill="#f0a818" stroke="#c07808" />
          <rect x="6" y="6" width="10" height="10" fill="#fff0a0" stroke="#fff" strokeWidth="2" />
        </svg>
        {INDEXES.map((index) => (
          <div key={index.name} className="mr-4 ml-[2px] flex items-center whitespace-nowrap">
            <span className="mr-[6px] text-[24px] leading-8 font-light text-[#202020]">{index.name}</span>
            <span className="w-[76px]">{index.last}</span>
            <span className="w-[86px] text-right">{index.diff}</span>
            <span className="w-[78px] text-right">{index.pct}</span>
            <span className="w-[98px] text-right text-[#202020]">
              {index.amount}
              <span className="text-[24px] leading-8 font-light">亿</span>
            </span>
          </div>
        ))}
        <div className="flex h-full items-center border-l border-[#909090] pl-[3px] text-[#202020]">
          <span className="text-[24px] leading-8 font-light">总成交</span>
          <span className="ml-3">1</span>
        </div>
      </footer>

      <Watermark />
    </div>
  );
}
